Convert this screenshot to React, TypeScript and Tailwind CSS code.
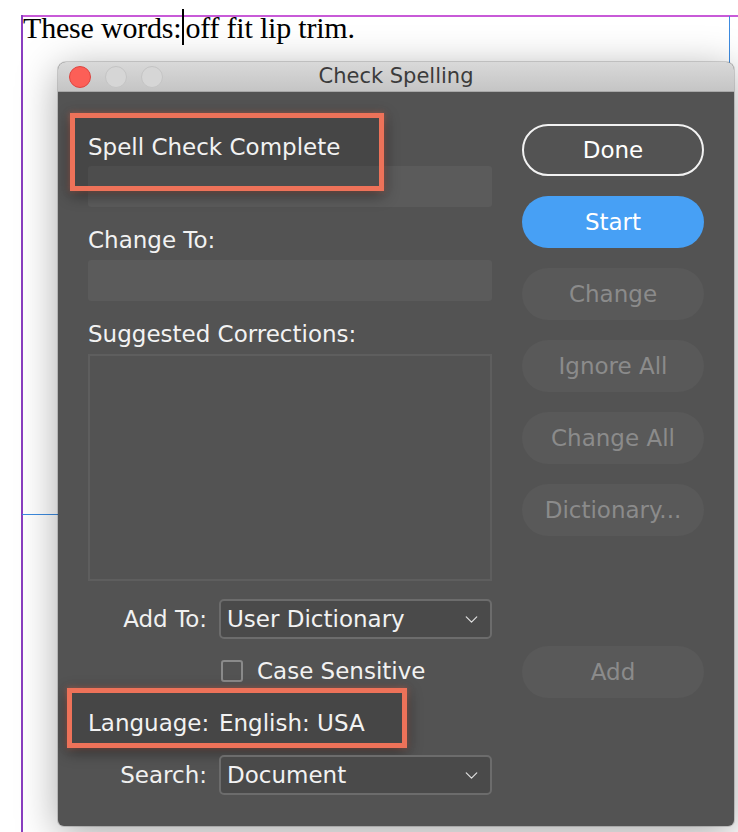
import React from 'react';
import { ChevronDown } from 'lucide-react';

const ui = "font-['DejaVu_Sans','Noto_Sans',sans-serif]";

const SideButton: React.FC<{ label: string; className?: string }> = ({ label, className }) => (
  <button
    className={`w-[182px] h-[52px] rounded-full bg-[#595959] text-[#8b8b8b] text-[23px] leading-none ${className ?? ''}`}
  >
    {label}
  </button>
);

const Select: React.FC<{ label: string; value: string }> = ({ label, value }) => (
  <div className="relative z-20 flex items-center">
    <span className="w-[131px] text-right pr-[12px] text-[23px] text-[#f0f0f0]">{label}</span>
    <div className="flex-1 h-[40px] rounded-[5px] border-2 border-[#6c6c6c] bg-[#4a4a4a] flex items-center justify-between pl-[6px] pr-[8px]">
      <span className="text-[23px] text-[#f2f2f2]">{value}</span>
      <ChevronDown size={21} strokeWidth={1.4} className="text-[#e0e0e0]" />
    </div>
  </div>
);

const App: React.FC = () => {
  return (
    <div className="relative w-[738px] h-[832px] overflow-hidden bg-white">
      {/* Document guides */}
      <div className="absolute left-[21px] top-[15px] right-0 h-[2px] bg-[#c85ad8]" />
      <div className="absolute left-[21px] top-[15px] bottom-0 w-[2px] bg-[#8a3ec0]" />
      <div className="absolute left-[729px] top-[16px] h-[50px] w-px bg-[#3d8be0]" />
      <div className="absolute left-[22px] top-[514px] w-[40px] h-px bg-[#3d8be0]" />

      {/* Document text */}
      <p className="relative pl-[23px] pt-[9px] font-['Liberation_Serif',serif] text-[30px] leading-[37px] tracking-[-0.2px] text-black">
        These words:<span className="inline-block w-[2px] h-[36px] bg-black align-top mx-px" />off fit lip trim.
      </p>

      {/* Dialog */}
      <div
        className={`relative ml-[58px] mt-[16px] w-[676px] h-[764px] rounded-t-[8px] rounded-b-[6px] bg-[#535353] shadow-[0_8px_40px_rgba(0,0,0,0.35),0_0_0_1px_rgba(0,0,0,0.15)] overflow-hidden ${ui}`}
      >
        {/* Title bar */}
        <div className="relative h-[30px] bg-gradient-to-b from-[#d9d9d9] to-[#c5c5c5] border-b border-[#a8a8a8] flex items-center justify-center">
          <div className="absolute left-[11px] top-[4px] flex gap-[14px]">
            <span className="w-[22px] h-[22px] rounded-full bg-[#fc5f57] border border-[#dd4540]" />
            <span className="w-[22px] h-[22px] rounded-full bg-[#d6d6d6] border border-[#c4c4c4]" />
            <span className="w-[22px] h-[22px] rounded-full bg-[#d6d6d6] border border-[#c4c4c4]" />
          </div>
          <span className="text-[21px] text-[#3b3b3b]">Check Spelling</span>
        </div>

        <div className="flex px-[30px]">
          {/* Left column */}
          <div className="w-[404px] pt-[41px] pb-[31px] text-[#f2f2f2]">
            <div className="relative z-20 h-[28px] leading-[28px] text-[23px]">Spell Check Complete</div>
            <div className="mt-[5px] h-[41px] rounded-[3px] bg-[#5b5b5b]" />

            <div className="mt-[19px] h-[28px] leading-[28px] text-[23px]">Change To:</div>
            <div className="mt-[6px] h-[41px] rounded-[3px] bg-[#5b5b5b]" />

            <div className="mt-[19px] h-[28px] leading-[28px] text-[23px]">Suggested Corrections:</div>
            <div className="mt-[6px] h-[227px] border-2 border-[#5e5e5e] bg-[#535353]" />

            <div className="mt-[18px]">
              <Select label="Add To:" value="User Dictionary" />
            </div>

            <div className="mt-[18px] h-[28px] flex items-center pl-[133px] gap-[14px]">
              <span className="w-[22px] h-[22px] rounded-[3px] border-2 border-[#8a8a8a]" />
              <span className="text-[23px] leading-[28px]">Case Sensitive</span>
            </div>

            <div className="relative z-20 mt-[24px] h-[28px] leading-[28px] text-[23px] flex">
              <span className="w-[131px]">Language:</span>
              <span>English: USA</span>
            </div>

            <div className="mt-[18px]">
              <Select label="Search:" value="Document" />
            </div>
          </div>

          {/* Right column */}
          <div className="ml-[30px] pt-[32px] flex flex-col gap-[20px]">
            <button className="w-[182px] h-[52px] rounded-full border-2 border-[#f2f2f2] text-white text-[23px] leading-none">
              Done
            </button>
            <button className="w-[182px] h-[52px] rounded-full bg-[#47a0f5] text-white text-[23px] leading-none">
              Start
            </button>
            <SideButton label="Change" />
            <SideButton label="Ignore All" />
            <SideButton label="Change All" />
            <SideButton label="Dictionary..." />
            <SideButton label="Add" className="mt-[90px]" />
          </div>
        </div>

        {/* Highlight boxes */}
        <div className="absolute z-10 left-[12px] top-[51px] w-[314px] h-[78px] border-[5px] border-[#ee7259] bg-black/15 shadow-[0_4px_14px_rgba(0,0,0,0.45),0_0_6px_rgba(238,114,89,0.6)]" />
        <div className="absolute z-10 left-[9px] top-[626px] w-[340px] h-[60px] border-[5px] border-[#ee7259] bg-black/15 shadow-[0_4px_14px_rgba(0,0,0,0.45),0_0_6px_rgba(238,114,89,0.6)]" />
      </div>
    </div>
  );
};

export default App;
